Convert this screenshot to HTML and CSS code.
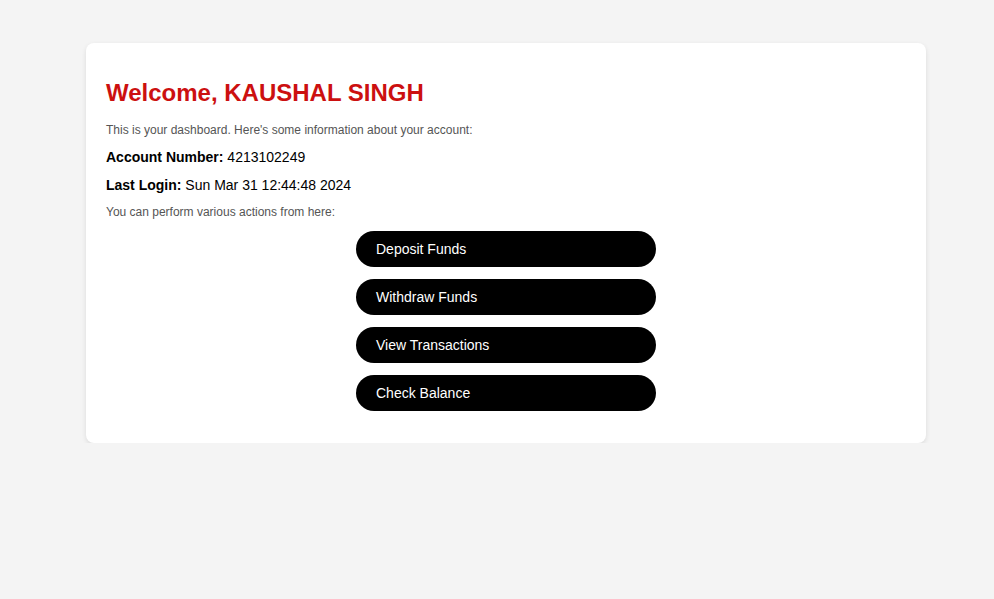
FILE: index.html
```html
<!DOCTYPE html>
<html>
<head>
<meta charset="utf-8">
<link rel="stylesheet" href="styles.css">
</head>
<body>
<div class="card">
  <h1 class="title">Welcome, KAUSHAL SINGH</h1>
  <p class="note">This is your dashboard. Here's some information about your account:</p>
  <p class="info"><strong>Account Number:</strong> 4213102249</p>
  <p class="info"><strong>Last Login:</strong> Sun Mar 31 12:44:48 2024</p>
  <p class="note">You can perform various actions from here:</p>
  <div class="actions">
    <a class="btn">Deposit Funds</a>
    <a class="btn">Withdraw Funds</a>
    <a class="btn">View Transactions</a>
    <a class="btn">Check Balance</a>
  </div>
</div>
</body>
</html>
```
FILE: styles.css
```css
html, body {
  margin: 0;
  padding: 0;
  background: #f4f4f4;
  font-family: "Liberation Sans", Arial, sans-serif;
}
body {
  padding-top: 43px;
}
.card {
  box-sizing: border-box;
  width: 840px;
  margin-left: 86px;
  background: #fff;
  border-radius: 8px;
  box-shadow: 0 2px 5px rgba(0, 0, 0, 0.1);
  padding: 36px 20px 32px;
}
.title {
  margin: 0 0 16px;
  font-size: 24px;
  font-weight: bold;
  color: #cc1010;
  line-height: 28px;
}
.note {
  margin: 0 0 12px;
  font-size: 12px;
  color: #555;
  line-height: 14px;
}
.info {
  margin: 0 0 12px;
  font-size: 14px;
  color: #000;
  line-height: 16px;
}
.actions {
  display: flex;
  flex-direction: column;
  align-items: center;
  gap: 12px;
}
.btn {
  box-sizing: border-box;
  width: 300px;
  height: 36px;
  line-height: 36px;
  padding: 0 20px;
  background: #000;
  color: #fff;
  font-size: 14px;
  border-radius: 18px;
  text-decoration: none;
}
```
